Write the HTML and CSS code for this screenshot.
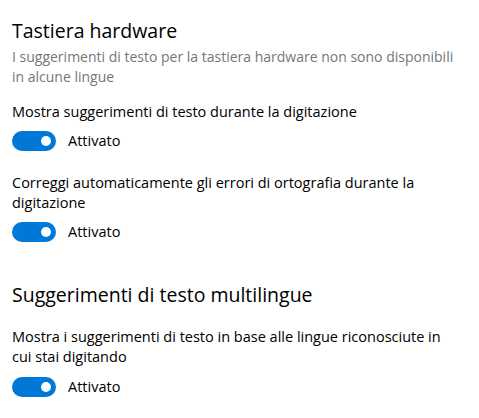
FILE: index.html
```html
<!DOCTYPE html>
<html lang="it">
<head>
<meta charset="utf-8">
<link rel="stylesheet" href="styles.css">
</head>
<body>
<main class="page">
  <h2 class="title">Tastiera hardware</h2>
  <p class="desc">I suggerimenti di testo per la tastiera hardware non sono disponibili in alcune lingue</p>

  <p class="label after-desc">Mostra suggerimenti di testo durante la digitazione</p>
  <div class="toggle-row">
    <span class="toggle"><span class="knob"></span></span>
    <span class="state">Attivato</span>
  </div>

  <p class="label">Correggi automaticamente gli errori di ortografia durante la digitazione</p>
  <div class="toggle-row">
    <span class="toggle"><span class="knob"></span></span>
    <span class="state">Attivato</span>
  </div>

  <h2 class="title second">Suggerimenti di testo multilingue</h2>
  <p class="label after-title">Mostra i suggerimenti di testo in base alle lingue riconosciute in cui stai digitando</p>
  <div class="toggle-row last">
    <span class="toggle"><span class="knob"></span></span>
    <span class="state">Attivato</span>
  </div>
</main>
</body>
</html>
```
FILE: styles.css
```css
html, body {
  margin: 0;
  padding: 0;
  background: #ffffff;
}
.page {
  font-family: "Open Sans", "Noto Sans", sans-serif;
  color: #000000;
  padding: 17px 12px 0 12px;
  width: 455px;
}
.title {
  margin: 0 0 2px 0;
  font-weight: 400;
  font-size: 19.5px;
  line-height: 28px;
}
.title.second {
  margin-top: 39px;
}
.desc {
  margin: 0;
  color: #767676;
  font-size: 14px;
  line-height: 20px;
  max-width: 452px;
}
.label {
  margin: 22px 0 0 0;
  font-size: 14.5px;
  line-height: 20px;
  max-width: 436px;
}
.label.after-desc {
  margin-top: 15px;
}
.label.after-title {
  margin-top: 18px;
}
.toggle-row {
  display: flex;
  align-items: center;
  gap: 12px;
  margin-top: 9px;
  height: 20px;
}
.toggle-row.last {
  margin-top: 10px;
}
.toggle {
  display: flex;
  align-items: center;
  justify-content: flex-end;
  box-sizing: border-box;
  width: 44px;
  height: 20px;
  border-radius: 10px;
  background: #0078d7;
  padding-right: 5px;
}
.knob {
  width: 10px;
  height: 10px;
  border-radius: 50%;
  background: #ffffff;
}
.state {
  font-size: 14.5px;
  line-height: 20px;
}
```
